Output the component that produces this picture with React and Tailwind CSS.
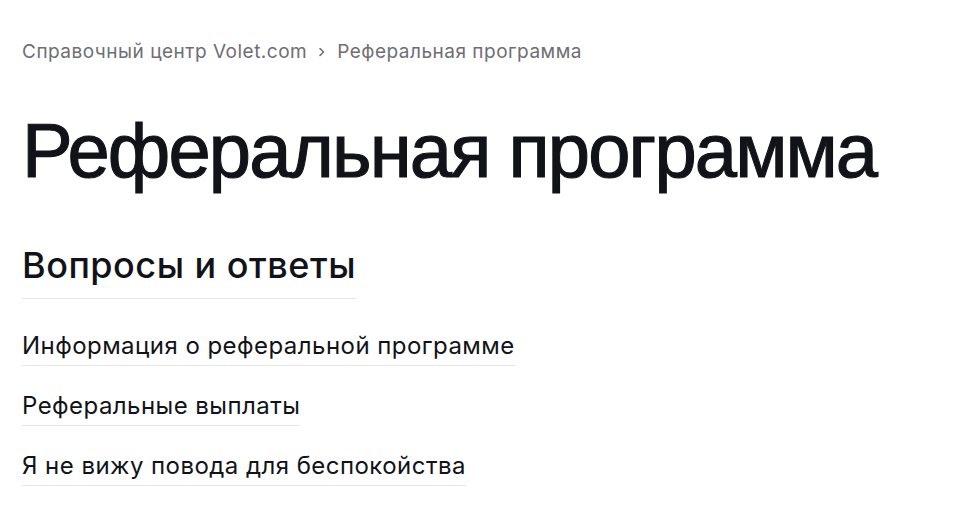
export default function App() {
  const links = [
    "Информация о реферальной программе",
    "Реферальные выплаты",
    "Я не вижу повода для беспокойства",
  ];
  return (
    <div className="min-h-[517px] bg-white px-[22px] pt-[38px]" style={{ fontFamily: "Inter, 'Noto Sans', sans-serif" }}>
      <nav className="flex items-center text-[19px] leading-[28px] tracking-[0.5px] text-[#6e6e73]">
        <span>Справочный центр Volet.com</span>
        <svg width="10" height="12" viewBox="0 0 10 12" fill="none" className="mx-[10px]">
          <path d="M3 2.5L6.5 6L3 9.5" stroke="#6e6e73" strokeWidth="1.6" strokeLinecap="round" strokeLinejoin="round" />
        </svg>
        <span>Реферальная программа</span>
      </nav>
      <h1
        className="mt-[40px] text-[76px] leading-[90px] tracking-[-1.9px] text-[#111318] [-webkit-text-stroke:1.1px_#111318]"
        style={{ fontFamily: "'Liberation Sans', Arial, sans-serif" }}
      >
        Реферальная программа
      </h1>
      <div className="mt-[46px]">
        <h2 className="inline-block border-b border-[#e5e5e5] pb-[10px] text-[36px] font-medium leading-[46px] tracking-[0.5px] text-[#111318]">
          Вопросы и ответы
        </h2>
      </div>
      <ul className="mt-[30px] flex flex-col gap-[23px]">
        {links.map((l) => (
          <li key={l}>
            <a className="inline-block border-b border-[#e5e5e5] pb-[2px] text-[24px] leading-[34px] tracking-[0.45px] text-[#111318]">{l}</a>
          </li>
        ))}
      </ul>
    </div>
  );
}
